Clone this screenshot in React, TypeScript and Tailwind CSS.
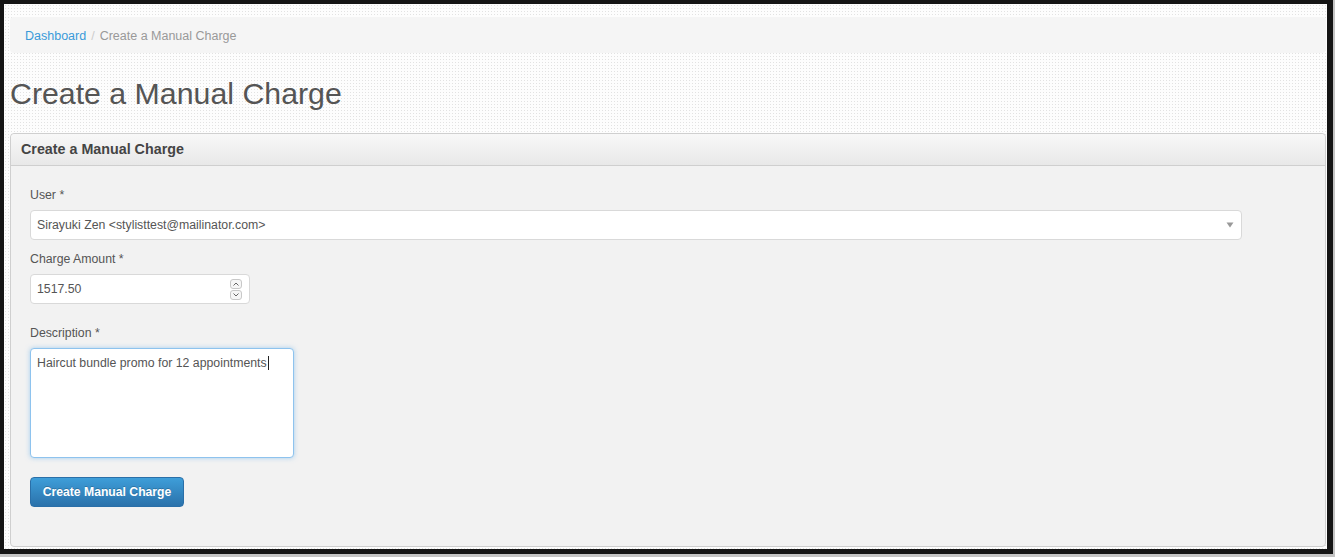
const font = { fontFamily: '"Liberation Sans", Arial, sans-serif' };

const Label: React.FC<{ text: string; className?: string }> = ({ text, className }) => (
  <div className={`text-[12.3px] leading-[17px] text-[#555] ${className ?? ''}`}>{text}</div>
);

const Spinner: React.FC = () => (
  <div className="flex flex-col gap-[1px]">
    <div className="flex h-[10px] w-[12px] items-center justify-center rounded-[3px] border border-[#c8c8c8] bg-[#f6f6f6]">
      <svg width="6" height="4" viewBox="0 0 6 4">
        <path d="M0.5 3.5 L3 1 L5.5 3.5" fill="none" stroke="#666" strokeWidth="1" />
      </svg>
    </div>
    <div className="flex h-[10px] w-[12px] items-center justify-center rounded-[3px] border border-[#c8c8c8] bg-[#f6f6f6]">
      <svg width="6" height="4" viewBox="0 0 6 4">
        <path d="M0.5 0.5 L3 3 L5.5 0.5" fill="none" stroke="#666" strokeWidth="1" />
      </svg>
    </div>
  </div>
);

export default function App() {
  return (
    <div className="h-[557px] w-[1335px] bg-[#c4c4c4] pb-[3px] pr-[2px]" style={font}>
      <div className="h-full w-full bg-[#151515] pb-[5px] pl-[4px] pr-[6px] pt-[4px]">
        <div className="h-full w-full overflow-hidden bg-[#fdfdfd] bg-[radial-gradient(circle,#e2e2e2_0.7px,transparent_0.9px)] bg-[length:3px_3px] pl-[6px] pr-[1px] pt-[13px]">
          {/* breadcrumb */}
          <div className="flex h-[36px] items-center rounded-[4px] bg-[#f5f5f5] px-[15px] pt-[2px] text-[12.5px]">
            <span className="text-[#3a9ad9]">Dashboard</span>
            <span className="px-[5px] text-[#ccc]">/</span>
            <span className="text-[#999]">Create a Manual Charge</span>
          </div>

          <h1 className="mt-[24px] text-[30.3px] leading-[33px] text-[#555]">Create a Manual Charge</h1>

          {/* panel */}
          <div className="mt-[23px] h-[414px] rounded-[4px] border border-[#cfcfcf] bg-[#f2f2f2]">
            <div className="flex h-[32px] items-center rounded-t-[4px] border-b border-[#cfcfcf] bg-gradient-to-b from-[#f8f8f8] to-[#e8e8e8] px-[10px]">
              <span className="text-[14.3px] font-bold text-[#444]">Create a Manual Charge</span>
            </div>

            <div className="px-[19px] pt-[21px]">
              <Label text="User *" />
              <div className="mt-[6px] flex h-[30px] w-[1212px] items-center justify-between rounded-[4px] border border-[#d9d9d9] bg-white pl-[6px] pr-[7px] text-[12.3px] text-[#555]">
                <span>Sirayuki Zen &lt;stylisttest@mailinator.com&gt;</span>
                <svg width="8" height="6" viewBox="0 0 8 6">
                  <path d="M0.5 0.5 H7.5 L4 5.5 Z" fill="#999" />
                </svg>
              </div>

              <Label text="Charge Amount *" className="mt-[11px]" />
              <div className="mt-[6px] flex h-[30px] w-[220px] items-center justify-between rounded-[4px] border border-[#d9d9d9] bg-white pl-[6px] pr-[7px] text-[12.3px] text-[#555]">
                <span>1517.50</span>
                <Spinner />
              </div>

              <Label text="Description *" className="mt-[21px]" />
              <div className="mt-[6px] h-[110px] w-[264px] rounded-[4px] border border-[#8ec3ee] bg-white px-[6px] pt-[4px] text-[12.3px] leading-[17px] text-[#555] shadow-[0_0_5px_rgba(102,175,233,0.55)]">
                Haircut bundle promo for 12 appointments
                <span className="ml-[1px] inline-block h-[14px] w-[1px] translate-y-[3px] bg-[#222]" />
              </div>

              <button className="mt-[19px] h-[30px] w-[154px] rounded-[4px] border border-[#2a6fa8] bg-gradient-to-b from-[#3e9ed9] to-[#2b72ab] text-[12.2px] font-bold text-white [text-shadow:0_-1px_0_rgba(0,0,0,0.2)]">
                Create Manual Charge
              </button>
            </div>
          </div>
        </div>
      </div>
    </div>
  );
}
